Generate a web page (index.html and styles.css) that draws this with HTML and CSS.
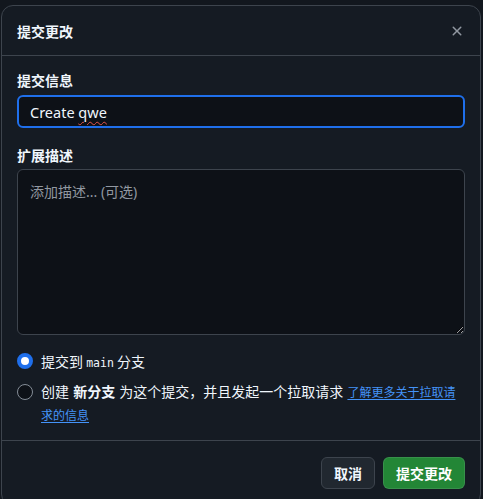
FILE: index.html
```html
<!DOCTYPE html>
<html lang="zh-CN">
<head>
<meta charset="utf-8">
<title>提交更改</title>
<link rel="stylesheet" href="styles.css">
</head>
<body>
<div class="dialog">
  <div class="dialog-header">
    <h1 class="dialog-title">提交更改</h1>
    <button class="close-btn" aria-label="关闭">
      <svg width="16" height="16" viewBox="0 0 16 16"><path fill="currentColor" d="M3.72 3.72a.75.75 0 0 1 1.06 0L8 6.94l3.22-3.22a.749.749 0 0 1 1.275.326.749.749 0 0 1-.215.734L9.06 8l3.22 3.22a.749.749 0 0 1-.326 1.275.749.749 0 0 1-.734-.215L8 9.06l-3.22 3.22a.751.751 0 0 1-1.042-.018.751.751 0 0 1-.018-1.042L6.94 8 3.72 4.78a.75.75 0 0 1 0-1.06Z"/></svg>
    </button>
  </div>
  <div class="dialog-body">
    <div class="field-label first">提交信息</div>
    <div class="text-input">Create <span class="misspelled">qwe</span></div>
    <div class="field-label second">扩展描述</div>
    <textarea class="textarea" placeholder="添加描述... (可选)"></textarea>
    <div class="radios">
      <div class="radio-row">
        <span class="radio checked"></span>
        <span class="radio-text">提交到 <code class="mono">main</code> 分支</span>
      </div>
      <div class="radio-row two">
        <span class="radio"></span>
        <span class="radio-text">创建 <strong>新分支</strong> 为这个提交，并且发起一个拉取请求 <a class="link" href="#">了解更多关于拉取请求的信息</a></span>
      </div>
    </div>
  </div>
  <div class="dialog-footer">
    <button class="btn btn-cancel">取消</button>
    <button class="btn btn-primary">提交更改</button>
  </div>
</div>
</body>
</html>
```
FILE: styles.css
```css
html, body {
  margin: 0;
  padding: 0;
  height: 499px;
  overflow: hidden;
  background: #12171e;
  color-scheme: dark;
}
body {
  font-family: "Noto Sans", "Noto Sans CJK SC", sans-serif;
  font-size: 14px;
  color: #f0f6fc;
}
.dialog {
  box-sizing: border-box;
  width: 480px;
  margin: 5px 0 0 1px;
  background: #151b23;
  border: 1px solid #3d444d;
  border-radius: 12px;
  display: flex;
  flex-direction: column;
}
.dialog-header {
  flex: none;
  height: 49px;
  padding: 0 15px;
  display: flex;
  align-items: center;
  justify-content: space-between;
  border-bottom: 1px solid #3d444d;
}
.dialog-title {
  margin: 0;
  font-size: 14px;
  font-weight: 700;
  line-height: 20px;
  font-family: "Noto Sans CJK SC", sans-serif;
}
.close-btn {
  width: 16px;
  height: 16px;
  padding: 0;
  border: 0;
  background: none;
  color: #9198a1;
  display: flex;
}
.dialog-body {
  flex: none;
  padding: 14px 15px 14px;
  display: flex;
  flex-direction: column;
}
.field-label {
  font-family: "Noto Sans CJK SC", sans-serif;
  font-weight: 700;
  font-size: 14px;
  line-height: 20px;
}
.field-label.first { margin-bottom: 5px; }
.field-label.second { margin-top: 17px; margin-bottom: 4px; }
.text-input {
  box-sizing: border-box;
  height: 33px;
  border: 2px solid #1f6feb;
  border-radius: 6px;
  background: #0d1117;
  padding: 0 11px;
  display: flex;
  align-items: center;
  white-space: pre;
  font-size: 14.5px;
  color: #f0f6fc;
}
.misspelled {
  text-decoration: underline wavy #e5534b;
  text-decoration-thickness: 1px;
  text-underline-offset: 3px;
}
.textarea {
  box-sizing: border-box;
  flex: none;
  height: 166px;
  width: 100%;
  margin: 0;
  border: 1px solid #3d444d;
  border-radius: 6px;
  background: #0d1117;
  padding: 12px 12px;
  font-family: "Noto Sans", "Noto Sans CJK SC", sans-serif;
  font-size: 14px;
  line-height: 20px;
  color: #f0f6fc;
  resize: vertical;
  outline: none;
}
.textarea::placeholder { color: #9198a1; }
.radios {
  margin-top: 16px;
  display: flex;
  flex-direction: column;
  gap: 7px;
}
.radio-row {
  display: flex;
  align-items: flex-start;
  gap: 8px;
}
.radio-row .radio-text {
  font-family: "Noto Sans CJK SC", sans-serif;
  line-height: 20px;
  color: #f0f6fc;
}
.radio-row.two .radio-text {
  line-height: 23px;
  word-spacing: 1px;
  padding-right: 3px;
}
.radio {
  box-sizing: border-box;
  flex: none;
  width: 16px;
  height: 16px;
  border-radius: 50%;
  border: 1px solid #848d97;
  background: #0d1117;
  margin-top: 2px;
}
.radio-row.two .radio { margin-top: 4px; }
.radio.checked {
  border: 4px solid #1f6feb;
  background: #ffffff;
}
.mono {
  font-family: "DejaVu Sans Mono", "Liberation Mono", monospace;
  font-size: 11.5px;
}
.link {
  color: #4493f8;
  font-size: 12px;
  word-spacing: 0;
  text-decoration: underline;
  text-underline-offset: 2px;
}
.dialog-footer {
  flex: none;
  border-top: 1px solid #3d444d;
  padding: 16px 15px;
  display: flex;
  justify-content: flex-end;
  gap: 8px;
}
.btn {
  box-sizing: border-box;
  height: 32px;
  padding: 0 12px;
  border-radius: 6px;
  font-family: "Noto Sans CJK SC", sans-serif;
  font-size: 14px;
  font-weight: 700;
  color: #f0f6fc;
  line-height: 20px;
}
.btn-cancel {
  background: #212830;
  border: 1px solid #3d444d;
}
.btn-primary {
  background: #238636;
  border: 1px solid rgba(240,246,252,0.1);
  color: #ffffff;
}
```
